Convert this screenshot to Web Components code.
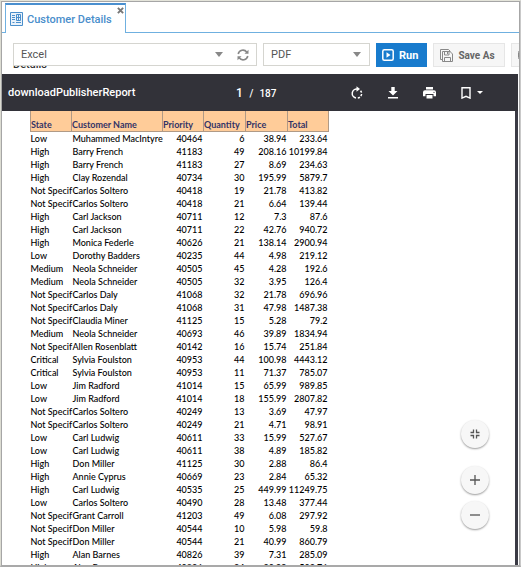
<!DOCTYPE html>
<html lang="en">
<head>
<meta charset="utf-8">
<title>Customer Details</title>
<style>
html,body{margin:0;height:100%;overflow:hidden;background:#fff;font-family:Roboto,"Liberation Sans",sans-serif}
</style>
</head>
<body>
<app-window>
  <tab-strip slot="tabs">Customer Details</tab-strip>
  <tool-bar slot="tools"></tool-bar>
  <pdf-viewer name="downloadPublisherReport" page="1" pages="187"><report-table></report-table></pdf-viewer>
</app-window>
<script>
function define(name, html, setup) {
  const t = document.createElement('template');
  t.innerHTML = '<style>:host,*{box-sizing:border-box}button,select,input{font:inherit;color:inherit;margin:0;padding:0;border:0;background:none}svg{display:block;flex:none}</style>' + html;
  customElements.define(name, class extends HTMLElement {
    constructor() {
      super();
      this.attachShadow({ mode: 'open' }).append(t.content.cloneNode(true));
    }
    connectedCallback() { if (setup) setup(this, this.shadowRoot); }
  });
}

define('app-window', `
<style>
:host{display:flex;flex-direction:column;height:100%;border:solid #a9a9a9;border-width:1px 1px 2px;border-top-color:#e4e4da;border-left-color:#dcdcd2;border-right-color:#c9c9c9}
main{flex:1;min-height:0;display:flex;flex-direction:column;border:1px solid #a6a6a6;border-bottom:0}
</style>
<main><slot name="tabs"></slot><slot name="tools"></slot><slot></slot></main>`);

define('tab-strip', `
<style>
:host{display:flex;height:31px;padding:1px 0 0 3px;border-bottom:1px solid #6fb0e0;flex:none}
nav{display:flex}
.tab{display:flex;height:30px;border:1px solid #6fb0e0;border-top:2px solid #4a8fcf;border-bottom:0;background:#fff;padding:0 1px 0 4px}
.label{display:flex;align-items:center;gap:4px;color:#4a8ecb;font-weight:500;font-size:11px;text-decoration:none}
.close{display:flex;margin:2px 0 0 5px;width:7px;height:8px}
</style>
<nav><div class="tab"><a class="label" href="#customer"><svg width="13" height="14" viewBox="0 0 13 14" fill="none" stroke="#4a8ecb"><path d="M.5.5h12v13H.5z" fill="#eaf2fa"/><path d="M2 3.500h3M2 5.500h3M2 7.500h3M2.500 10.500h2M6.500 2.500h4v6h-4zM6.500 5.500h4M8.500 3v5M6 10.500h5" stroke-width="1"/></svg><span><slot></slot></span></a>
<button class="close" aria-label="Close tab"><svg width="7" height="7" viewBox="0 0 8 8" stroke="#777" stroke-width="2.200"><path d="M1 1l6 6M7 1L1 7"/></svg></button></div></nav>`);

define('select-box', `
<style>
:host{display:flex;height:23px;border:1px solid #d5d5d0;background:#fff;align-items:center;position:relative}
label{flex:1;min-width:0;display:flex;align-items:center}
select{appearance:none;flex:1;min-width:0;height:20px;padding-left:7px;font-size:11px;color:#555}
svg{pointer-events:none}
</style>
<label><select></select><svg width="8" height="5" viewBox="0 0 8 5" fill="#888"><path d="M0 0h8L4 5z"/></svg></label><slot></slot>`,
(host, root) => {
  const s = root.querySelector('select');
  s.setAttribute('aria-label', host.getAttribute('label'));
  s.add(new Option(host.getAttribute('value')));
});

define('tool-button', `
<style>
:host{display:block;flex:none}
button{display:flex;align-items:center;height:24px;padding:0 9px 0 6px;gap:5px;border:1px solid #e6e6e6;background:#f6f6f6;color:#666;font-weight:700;font-size:10px;white-space:nowrap}
:host([primary]) button{background:#187bcd;border-color:#187bcd;color:#fff;padding:0 8px 0 5px;font-size:11px}
</style>
<button><slot name="icon"></slot><slot></slot></button>`,
(host, root) => {
  const label = host.getAttribute('label');
  if (label) root.querySelector('button').setAttribute('aria-label', label);
});

define('tool-bar', `
<style>
:host{display:flex;position:relative;height:41px;padding:10px 0 0 11px;gap:6px;flex:none;align-items:flex-start;overflow:hidden}
.source{width:244px;flex:none}
.format{width:107px;flex:none;padding-right:8px}
.refresh{display:flex;padding:0 7px 0 14px}
.tucked{position:absolute;left:11px;top:25px;font:500 11px/14px Roboto,sans-serif;color:#333;margin:0}
select-box{z-index:1}
</style>
<h2 class="tucked">Details</h2>
<select-box class="source" label="Source" value="Excel"><button class="refresh" aria-label="Refresh"><svg width="12" height="12" viewBox="0 0 12 12" fill="none" stroke="#888" stroke-width="1.600"><path d="M1.200 5A4.800 4.800 0 0 1 9.800 3.200M10.800 7A4.800 4.800 0 0 1 2.200 8.800"/><path d="M11.500.8v4h-4zM.5 11.200v-4h4z" fill="#888" stroke="none"/></svg></button></select-box>
<select-box class="format" label="Format" value="PDF"></select-box>
<tool-button primary><svg slot="icon" width="12" height="12" viewBox="0 0 12 12" fill="none" stroke="#fff"><rect x=".8" y=".8" width="10.400" height="10.400" rx="1.500" stroke-width="1.500"/><path d="M4.500 3.300v5.400L8.500 6z" fill="#fff" stroke="none"/></svg>Run</tool-button>
<tool-button><svg slot="icon" width="13" height="13" viewBox="0 0 13 13" fill="none" stroke="#888"><path d="M2.500 10.500h-2v-10h8l2 2"/><path d="M2.500 2.500h7.500l2.500 2.500v7.500h-10zM4.500 2.500v3.500h4.500v-3.500M4.500 12.500v-4h6v4M7.500 3v2"/></svg>Save As</tool-button>
<tool-button label="Share"><svg slot="icon" width="13" height="12" viewBox="0 0 13 12" fill="none" stroke="#888"><rect x=".5" y="1.500" width="10" height="9" rx="2"/></svg></tool-button>`);

define('pdf-viewer', `
<style>
:host{flex:1;min-height:0;display:flex;flex-direction:column}
header{display:grid;grid-template-columns:1fr auto 1fr;align-items:center;height:37px;flex:none;background:#323239;color:#fff;padding:0 14px 0 6px;margin-right:1px}
.name{font-size:11px;font-weight:500;white-space:nowrap}
.pages{display:flex;align-items:baseline;gap:6px;font-size:10px;font-weight:500}
.pages input{width:8px;font-size:12px;font-weight:500;text-align:center}
.actions{display:flex;justify-content:flex-end;align-items:center;gap:25px;margin-right:21px}
.actions button{display:flex;align-items:center;gap:6px}
.page{flex:1;min-height:0;overflow:hidden;position:relative;margin-right:1px;border-right:3px solid #3a3a44;padding-left:28px}
.zoom{position:absolute;right:26px;bottom:36px;display:flex;flex-direction:column;gap:7px}
.zoom button{display:flex;align-items:center;justify-content:center;width:28px;height:28px;border-radius:50%;background:#f7f7f7;box-shadow:0 1px 2px #0006}
.zoom .fit{margin-bottom:11px}
</style>
<header><span class="name"></span>
<div class="pages"><input aria-label="Page"><span>/</span><span class="total"></span></div>
<div class="actions">
<button aria-label="Rotate"><svg width="12" height="13" viewBox="0 0 12 13" fill="none" stroke="#fff" stroke-width="1.500"><path d="M6.500 3A4.500 4.500 0 0 0 5 11.900"/><path d="M6.800 12A4.500 4.500 0 0 0 9.400 4.500" stroke-dasharray="2.200 1.300"/><path d="M5.500.2l3.500 2.800-3.500 2.800z" fill="#fff" stroke="none"/></svg></button>
<button aria-label="Download"><svg width="10" height="12" viewBox="0 0 10 12" fill="#fff"><path d="M3.300 0h3.400v4H9.500L5 8.500.5 4h2.800zM0 10h10v1.500H0z"/></svg></button>
<button aria-label="Print"><svg width="13" height="12" viewBox="0 0 13 12" fill="#fff"><path d="M3 0h7v2.500H3zM2 3.300h9a2 2 0 0 1 2 2v4h-2.500V7h-8v2.300H0v-4a2 2 0 0 1 2-2zM3.500 8h6v3.500h-6z"/><circle cx="11" cy="5.300" r=".6" fill="#323239"/></svg></button>
<button aria-label="Bookmarks"><svg width="10" height="12" viewBox="0 0 10 12" fill="none" stroke="#fff" stroke-width="1.400"><path d="M1 .8h8v10.300L5 9.300l-4 1.800z"/></svg><svg width="6" height="3" viewBox="0 0 6 3" fill="#fff"><path d="M0 0h6L3 3z"/></svg></button>
</div></header>
<div class="page"><slot></slot>
<div class="zoom">
<button class="fit" aria-label="Fit to page"><svg width="10" height="10" viewBox="0 0 10 10" fill="none" stroke="#555" stroke-width="1.300"><path d="M.5 3.500h3v-3M9.500 3.500h-3v-3M.5 6.500h3v3M9.500 6.500h-3v3"/></svg></button>
<button aria-label="Zoom in"><svg width="10" height="10" viewBox="0 0 10 10" stroke="#555" stroke-width="1.300"><path d="M0 5h10M5 0v10"/></svg></button>
<button aria-label="Zoom out"><svg width="10" height="10" viewBox="0 0 10 10" stroke="#555" stroke-width="1.300"><path d="M0 5h10"/></svg></button>
</div></div>`,
(host, root) => {
  root.querySelector('.name').textContent = host.getAttribute('name');
  root.querySelector('input').value = host.getAttribute('page');
  root.querySelector('.total').textContent = host.getAttribute('pages');
});

const rows = `Low|Muhammed MacIntyre|40464|6|38.94|233.64
High|Barry French|41183|49|208.16|10199.84
High|Barry French|41183|27|8.69|234.63
High|Clay Rozendal|40734|30|195.99|5879.7
Not Specif|Carlos Soltero|40418|19|21.78|413.82
Not Specif|Carlos Soltero|40418|21|6.64|139.44
High|Carl Jackson|40711|12|7.3|87.6
High|Carl Jackson|40711|22|42.76|940.72
High|Monica Federle|40626|21|138.14|2900.94
Low|Dorothy Badders|40235|44|4.98|219.12
Medium|Neola Schneider|40505|45|4.28|192.6
Medium|Neola Schneider|40505|32|3.95|126.4
Not Specif|Carlos Daly|41068|32|21.78|696.96
Not Specif|Carlos Daly|41068|31|47.98|1487.38
Not Specif|Claudia Miner|41125|15|5.28|79.2
Medium|Neola Schneider|40693|46|39.89|1834.94
Not Specif|Allen Rosenblatt|40142|16|15.74|251.84
Critical|Sylvia Foulston|40953|44|100.98|4443.12
Critical|Sylvia Foulston|40953|11|71.37|785.07
Low|Jim Radford|41014|15|65.99|989.85
Low|Jim Radford|41014|18|155.99|2807.82
Not Specif|Carlos Soltero|40249|13|3.69|47.97
Not Specif|Carlos Soltero|40249|21|4.71|98.91
Low|Carl Ludwig|40611|33|15.99|527.67
Low|Carl Ludwig|40611|38|4.89|185.82
High|Don Miller|41125|30|2.88|86.4
High|Annie Cyprus|40669|23|2.84|65.32
High|Carl Ludwig|40535|25|449.99|11249.75
Low|Carlos Soltero|40490|28|13.48|377.44
Not Specif|Grant Carroll|41203|49|6.08|297.92
Not Specif|Don Miller|40544|10|5.98|59.8
Not Specif|Don Miller|40544|21|40.99|860.79
High|Alan Barnes|40826|39|7.31|285.09
High|Alan Barnes|40826|24|20.99|503.76`.split('\n').map(r => r.split('|'));

define('report-table', `
<style>
:host{display:block}
table{border-collapse:collapse;table-layout:fixed;width:298px;font:500 9px/13px Lato,"Open Sans",sans-serif;color:#000}
th{height:20px;padding:0;vertical-align:bottom;text-align:left;background:#ffcc99;color:#333366;border:1px solid #b09a86;border-top:0;font-weight:700;line-height:13px}
td{height:13px;padding:0 1px;white-space:nowrap;text-align:right}
td:nth-child(-n+2){text-align:left}
td:first-child{padding:0}
</style>
<table><colgroup><col style="width:41px"><col style="width:91px"><col style="width:41px"><col style="width:42px"><col style="width:42px"><col style="width:41px"></colgroup>
<thead><tr><th>State</th><th>Customer Name</th><th>Priority</th><th>Quantity</th><th>Price</th><th>Total</th></tr></thead><tbody></tbody></table>`,
(host, root) => {
  const body = root.querySelector('tbody');
  for (const r of rows) {
    const tr = body.insertRow();
    for (const v of r) tr.insertCell().textContent = v;
  }
});
</script>
</body>
</html>
